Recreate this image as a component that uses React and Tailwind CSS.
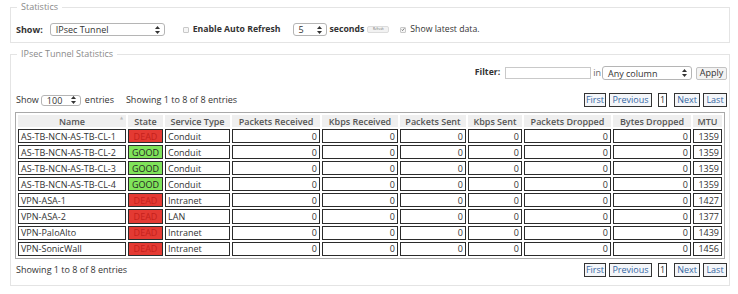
import React from 'react';

const font = { fontFamily: '"Open Sans", "DejaVu Sans", sans-serif' };

const rows = [
  { name: 'AS-TB-NCN-AS-TB-CL-1', state: 'DEAD', type: 'Conduit', mtu: 1359 },
  { name: 'AS-TB-NCN-AS-TB-CL-2', state: 'GOOD', type: 'Conduit', mtu: 1359 },
  { name: 'AS-TB-NCN-AS-TB-CL-3', state: 'GOOD', type: 'Conduit', mtu: 1359 },
  { name: 'AS-TB-NCN-AS-TB-CL-4', state: 'GOOD', type: 'Conduit', mtu: 1359 },
  { name: 'VPN-ASA-1', state: 'DEAD', type: 'Intranet', mtu: 1427 },
  { name: 'VPN-ASA-2', state: 'DEAD', type: 'LAN', mtu: 1377 },
  { name: 'VPN-PaloAlto', state: 'DEAD', type: 'Intranet', mtu: 1439 },
  { name: 'VPN-SonicWall', state: 'DEAD', type: 'Intranet', mtu: 1456 },
];

const columns = [
  { label: 'Name', w: 'w-[108px]' },
  { label: 'State', w: 'w-[35px]' },
  { label: 'Service Type', w: 'w-[65px]' },
  { label: 'Packets Received', w: 'w-[88px]' },
  { label: 'Kbps Received', w: 'w-[76px]' },
  { label: 'Packets Sent', w: 'w-[66px]' },
  { label: 'Kbps Sent', w: 'w-[54px]' },
  { label: 'Packets Dropped', w: 'w-[87px]' },
  { label: 'Bytes Dropped', w: 'w-[78px]' },
  { label: 'MTU', w: 'w-[29px]' },
];

// petite double flèche des listes déroulantes
const SelectArrows = () => (
  <svg width="5" height="8" viewBox="0 0 5 8" className="shrink-0">
    <path d="M2.5 0 L5 3 L0 3 Z" fill="#333" />
    <path d="M2.5 8 L5 5 L0 5 Z" fill="#333" />
  </svg>
);

const FakeSelect = ({ value, className }) => (
  <div className={`flex items-center justify-between bg-white border border-[#b5b5b5] rounded-[3px] pl-[5px] pr-[4px] ${className}`}>
    <span className="leading-none">{value}</span>
    <SelectArrows />
  </div>
);

const Checkbox = ({ checked }) => (
  <div className="w-[6px] h-[6px] border border-[#c8c8c8] bg-[#f6f6f6] rounded-[1px] flex items-center justify-center">
    {checked && (
      <svg width="5" height="5" viewBox="0 0 5 5">
        <path d="M0.8 2.6 L2 3.8 L4.3 1" stroke="#555" strokeWidth="0.9" fill="none" />
      </svg>
    )}
  </div>
);

const Pager = () => (
  <div className="flex items-center h-[14px] text-[#3566a3]">
    <span className="h-full w-[22px] flex items-center justify-center border border-[#333] bg-[#f4f6f9]">First</span>
    <span className="h-full w-[43px] ml-[3px] flex items-center justify-center border border-[#333] bg-[#f4f6f9]">Previous</span>
    <span className="h-full w-[9px] ml-[6px] flex items-center justify-center border border-[#333] bg-white text-[#333]">1</span>
    <span className="h-full w-[26px] ml-[7px] flex items-center justify-center border border-[#333] bg-[#f4f6f9]">Next</span>
    <span className="h-full w-[24px] ml-[3px] flex items-center justify-center border border-[#333] bg-[#f4f6f9]">Last</span>
  </div>
);

export default function App() {
  return (
    <div className="w-[738px] h-[294px] bg-white text-[#333] text-[9px] pt-[1px] overflow-hidden" style={font}>

      {/* Statistics */}
      <fieldset className="ml-[10px] w-[720px] border border-[#e4e4e4] px-[5px] pb-[6px]">
        <legend className="px-[4px] ml-[1px] text-[#8a8a8a] leading-[12px]">Statistics</legend>
        <div className="flex items-center h-[13px] mt-[10px]">
          <span className="font-bold">Show:</span>
          <FakeSelect value="IPsec Tunnel" className="ml-[7px] w-[115px] h-[13px]" />
          <div className="ml-[18px]"><Checkbox /></div>
          <span className="ml-[4px] font-bold text-[8.7px]">Enable Auto Refresh</span>
          <FakeSelect value="5" className="ml-[12px] w-[34px] h-[13px]" />
          <span className="ml-[3px] font-bold text-[8.7px]">seconds</span>
          <span className="ml-[3px] w-[22px] h-[7px] rounded-[2px] bg-[#f2f2f2] border border-[#dcdcdc] text-[3px] text-[#666] flex items-center justify-center">Refresh</span>
          <div className="ml-[11px]"><Checkbox checked /></div>
          <span className="ml-[4px] text-[8.7px]">Show latest data.</span>
        </div>
      </fieldset>

      {/* IPsec Tunnel Statistics */}
      <fieldset className="ml-[10px] mt-[5px] w-[720px] border border-[#e4e4e4] pl-[4px] pr-[2px] pb-[8px]">
        <legend className="px-[4px] ml-[2px] text-[#8a8a8a] leading-[12px]">IPsec Tunnel Statistics</legend>

        <div className="flex items-center justify-end h-[14px] mt-[6px]">
          <span className="font-bold text-[8.7px]">Filter:</span>
          <div className="ml-[5px] w-[86px] h-[12px] border border-[#c9c9c9] bg-white" />
          <span className="ml-[2px] text-[#666]">in</span>
          <FakeSelect value="Any column" className="ml-[1px] w-[90px] h-[14px]" />
          <span className="ml-[4px] w-[31px] h-[13px] border border-[#c3c3c3] rounded-[2px] bg-[#f3f3f3] flex items-center justify-center">Apply</span>
        </div>

        <div className="flex items-center justify-between mt-[13px]">
          <div className="flex items-center pl-[1px]">
            <span>Show</span>
            <FakeSelect value="100" className="ml-[2px] w-[40px] h-[11px]" />
            <span className="ml-[4px]">entries</span>
            <span className="ml-[12px]">Showing 1 to 8 of 8 entries</span>
          </div>
          <Pager />
        </div>

        <table className="mt-[5px] w-[710px] table-fixed border-separate border-spacing-[2px] border border-[#a9a9a9]">
          <thead>
            <tr>
              {columns.map((c) => (
                <th key={c.label} className={`${c.w} h-[12px] p-0 font-semibold text-[#555] bg-[#efefef] leading-none relative`}>
                  {c.label}
                  {c.label === 'Name' && (
                    <span className="absolute right-[3px] top-[1px] text-[4px] text-[#bbb]">▲</span>
                  )}
                </th>
              ))}
            </tr>
          </thead>
          <tbody>
            {rows.map((r) => (
              <tr key={r.name}>
                <td className="h-[14.1px] p-0 pl-[2px] border border-[#2b2b2b] leading-none">{r.name}</td>
                <td
                  className={`h-[14.1px] p-0 text-center border border-[#2b2b2b] leading-none ${
                    r.state === 'DEAD' ? 'bg-[#e43a33] text-[#c4211b]' : 'bg-[#80e35a] text-[#222]'
                  }`}
                >
                  {r.state}
                </td>
                <td className="h-[14.1px] p-0 pl-[2px] border border-[#2b2b2b] leading-none">{r.type}</td>
                {[0, 0, 0, 0, 0, 0].map((v, i) => (
                  <td key={i} className="h-[14.1px] p-0 pr-[2px] text-right border border-[#2b2b2b] leading-none">{v}</td>
                ))}
                <td className="h-[14.1px] p-0 pr-[2px] text-right border border-[#2b2b2b] leading-none">{r.mtu}</td>
              </tr>
            ))}
          </tbody>
        </table>

        <div className="flex items-center justify-between mt-[4px]">
          <span className="pl-[1px]">Showing 1 to 8 of 8 entries</span>
          <Pager />
        </div>
      </fieldset>
    </div>
  );
}
